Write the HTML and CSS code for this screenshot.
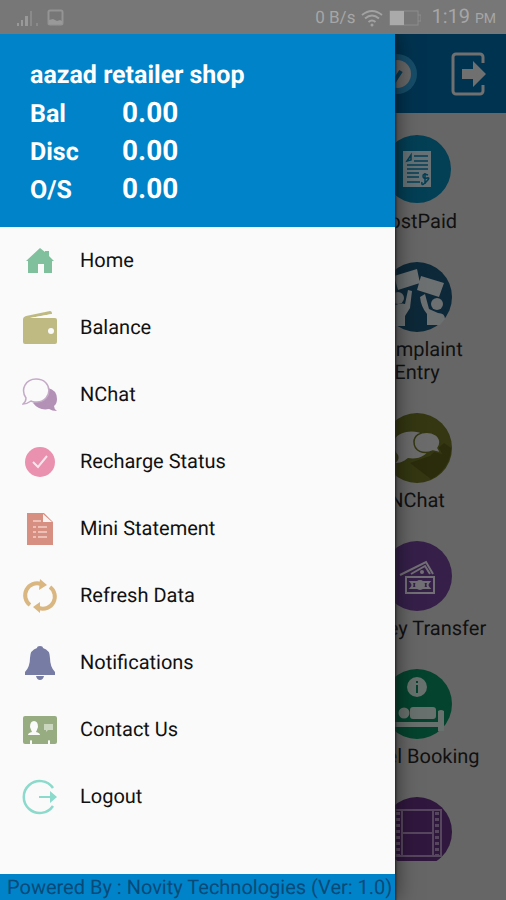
FILE: index.html
```html
<!DOCTYPE html>
<html lang="en">
<head>
<meta charset="utf-8">
<meta name="viewport" content="width=device-width, initial-scale=1">
<title>Retailer</title>
<link rel="stylesheet" href="styles.css">
</head>
<body>
<div class="status">
  <svg class="status-signal" viewBox="0 0 24 18" aria-hidden="true"><path d="M1 14h2v3H1zM5 11h2v6H5zM9 7h3v10H9z" fill="#999"/><path d="M14 2h2v15h-2zM20 14h2v3h-2z" fill="#8a8a8a"/></svg>
  <svg class="status-picture" viewBox="0 0 18 18" aria-hidden="true"><rect x="1.5" y="1.5" width="14" height="14" rx="1.5" fill="none" stroke="#949494" stroke-width="2"/><path d="M2 15v-4l4-1 4 2 3-1 2 1v3z" fill="#999"/></svg>
  <span class="status-rate">0 B/s</span>
  <svg class="status-wifi" viewBox="0 0 22 18" aria-hidden="true"><g fill="none" stroke="#a2a2a2" stroke-width="2"><path d="M1 6q10-8 20 0"/><path d="M4 9.500q7-6 14 0"/><path d="M7.500 13q3.500-3 7 0"/></g><circle cx="11" cy="16" r="1.500" fill="#a2a2a2"/></svg>
  <svg class="status-battery" viewBox="0 0 32 16" aria-hidden="true"><rect x="1" y="1" width="28" height="14" fill="none" stroke="#8d8d8d"/><path d="M29 5h3v6h-3" fill="none" stroke="#8d8d8d"/><path d="M1 1h14v14H1z" fill="#aaa"/></svg>
  <span class="status-time">1:19 <small>PM</small></span>
</div>
<div class="stage">
  <main class="page">
    <header class="topbar">
      <button class="icon-button" type="button" aria-label="Status"><svg viewBox="0 0 46 46" aria-hidden="true"><circle cx="21" cy="23" r="20" fill="#174d69"/><circle cx="21" cy="23" r="14" fill="#686868"/><path d="M13 23l6 6 6-9" fill="none" stroke="#063a55" stroke-width="4"/></svg></button>
      <button class="icon-button" type="button" aria-label="Exit"><svg viewBox="0 0 46 46" aria-hidden="true"><path d="M37 12V6a3 3 0 0 0-3-3H10a3 3 0 0 0-3 3v34a3 3 0 0 0 3 3h24a3 3 0 0 0 3-3v-6" fill="none" stroke="#707070" stroke-width="3"/><path d="M16 18h11v-8l13 13-13 13v-8H16z" fill="#707070"/></svg></button>
    </header>
    <div class="tiles">
      <a class="tile" href="#"><svg class="tile-icon" viewBox="0 0 70 70" aria-hidden="true"><circle cx="35" cy="35" r="34" fill="#033f55"/><path d="M21 17h28v36H21z" fill="#667276"/><g stroke="#033f55" stroke-width="1.500"><path d="M32 22h14M32 27h14M25 31h21M25 35h21M25 39h12M25 43h12M25 48h13"/></g><path d="M25 27l4-6v5zM46 41q-5-2-5 1t4 2-1 4-4 0M43 39v11" fill="none" stroke="#033f55" stroke-width="1.500"/></svg><span>PostPaid</span></a>
      <a class="tile" href="#"><svg class="tile-icon" viewBox="0 0 70 70" aria-hidden="true"><circle cx="35" cy="35" r="35" fill="#0d2838"/><g fill="#6c7071"><path d="M12 14l23-7 3 14-22 7zM39 14l23 7-5 14-22-7z"/><circle cx="16" cy="36" r="6"/><path d="M7 47q10-7 16-5l3-14 4 1-2 17-5 8v10H7z"/><circle cx="55" cy="42" r="6"/><path d="M38 35l5-3 4 15 9 4q7 0 7 6l-5 6H45V52q-6-7-7-17z"/></g></svg><span>Complaint<br>Entry</span></a>
      <a class="tile" href="#"><svg class="tile-icon" viewBox="0 0 70 70" aria-hidden="true"><circle cx="35" cy="35" r="35" fill="#343711"/><path d="M48 43L62 30l7 5a35 35 0 0 1-20 31L28 50z" fill="#2b2c0b"/><path d="M12 30c0-15 35-16 36 1 0 12-13 16-22 14-5 4-8 5-13 5 4-3 4-5 3-8-3-3-4-7-4-12z" fill="#6b6b6b"/><path d="M32 29c0-13 25-13 26 0q0 3-2 6l3 5-8-2c-10 4-19 0-19-9z" fill="#6b6b6b" stroke="#343711" stroke-width="1.500"/></svg><span>NChat</span></a>
      <a class="tile" href="#"><svg class="tile-icon" viewBox="0 0 70 70" aria-hidden="true"><circle cx="35" cy="35" r="35" fill="#36204a"/><g fill="none" stroke="#727075" stroke-width="2"><path d="M18 34l26-13 7 12M29 33l14-8 5 8"/><rect x="24" y="36" width="28" height="16"/></g><path d="M27 39h22v10H27z" fill="#36204a"/><path d="M29 41q3 3 0 6h18q-3-3 0-6z" fill="none" stroke="#727075" stroke-width="2"/><ellipse cx="38" cy="44" rx="5" ry="5" fill="#727075"/><circle cx="40" cy="31" r="2" fill="#727075"/></svg><span>Money Transfer</span></a>
      <a class="tile" href="#"><svg class="tile-icon" viewBox="0 0 70 70" aria-hidden="true"><circle cx="35" cy="35" r="35" fill="#04432e"/><g fill="#68716d"><circle cx="35" cy="18" r="10"/><circle cx="22" cy="44" r="5.500"/><rect x="28" y="38" width="26" height="12" rx="3"/><path d="M5 53h51V42q3-2 6 0v20h-6v-4H8z"/></g><path d="M35 16v8M35 12v2" fill="none" stroke="#04432e" stroke-width="2"/></svg><span>Hotel Booking</span></a>
      <a class="tile" href="#" aria-label="Movies"><svg class="tile-icon" viewBox="0 0 70 70" aria-hidden="true"><circle cx="35" cy="35" r="35" fill="#30173e"/><g fill="none" stroke="#57475e" stroke-width="2"><path d="M13 13h46v46H13zM20 13v46M51 13v46M20 36h31"/><path d="M16 15v44M55 15v44" stroke-width="4" stroke-dasharray="3 3"/></g></svg></a>
    </div>
  </main>
  <aside class="drawer">
    <header class="account">
      <h1>aazad retailer shop</h1>
      <dl>
        <dt>Bal</dt><dd>0.00</dd>
        <dt>Disc</dt><dd>0.00</dd>
        <dt>O/S</dt><dd>0.00</dd>
      </dl>
    </header>
    <nav class="menu">
      <a href="#"><svg viewBox="0 0 36 36" aria-hidden="true"><path d="M18 5l5 4V8h4v5l5 5h-2v12h-8v-9h-6v9H6V18H4z" fill="#80c09c"/></svg>Home</a>
      <a href="#"><svg viewBox="0 0 36 36" aria-hidden="true"><path d="M1 9Q1 7 4 6l24-5q2 0 2 3L8 8H33q2 0 2 2v22q0 2-2 2H3q-2 0-2-2z" fill="#bfba82"/><path d="M5 8h3l22-4v4z" fill="#fafafa"/><circle cx="29" cy="21" r="3" fill="#fafafa"/></svg>Balance</a>
      <a href="#"><svg viewBox="0 0 36 36" aria-hidden="true"><path d="M26 11q9 2 9 11 0 5-3 7 0 3 3 5-5 0-8-2-10 2-16-6z" fill="#b391b7"/><path d="M14 2c17 0 17 22 1 23-3 0-5 0-6-1q-4 3-8 3 3-2 3-6C-2 12 4 2 14 2z" fill="#fafafa" stroke="#c4aac7" stroke-width="1.500"/></svg>NChat</a>
      <a href="#"><svg viewBox="0 0 36 36" aria-hidden="true"><circle cx="18" cy="18" r="15" fill="#ea91af"/><path d="M11 18l5 5 9-11" fill="none" stroke="#fae5ec" stroke-width="2"/></svg>Recharge Status</a>
      <a href="#"><svg viewBox="0 0 36 36" aria-hidden="true"><path d="M5 2h17l9 9v23H5z" fill="#d68f80"/><path d="M21 3v8h9z" fill="#fbf3f1"/><path d="M11 10h8M11 16h3M16 16h9M11 21h3M16 21h9M11 26h3M16 26h9" stroke="#ecc0b6" stroke-width="2"/></svg>Mini Statement</a>
      <a href="#"><svg viewBox="0 0 36 36" aria-hidden="true"><g fill="none" stroke="#dab780" stroke-width="4"><path d="M8 27A12 12 0 0 1 19 6"/><path d="M28 9A12 12 0 0 1 17 30"/></g><path d="M18 1l7 6-8 5zM18 24v11l-7-6z" fill="#dab780"/></svg>Refresh Data</a>
      <a href="#"><svg viewBox="0 0 36 36" aria-hidden="true"><path d="M15 3q0-2 3-2t3 2q7 2 7 10 0 9 5 14v3H3v-3q5-5 5-14 0-8 7-10zM14 31h8q-1 4-4 4t-4-4z" fill="#777ca5"/></svg>Notifications</a>
      <a href="#"><svg viewBox="0 0 36 36" aria-hidden="true"><rect x="1" y="4" width="34" height="28" rx="2" fill="#98ac82"/><path d="M6 23q0-2 4-3-1-2-2-5 0-6 4-6t4 6q-1 3-2 5 4 1 4 3zM8 32v-3q1-2 2 0v3zM26 32v-3q1-2 2 0v3z" fill="#fafafa"/><path d="M22 12h9v6h-5l-2 2v-2h-2z" fill="#cbd6be"/></svg>Contact Us</a>
      <a href="#"><svg viewBox="0 0 36 36" aria-hidden="true"><path d="M31 9A16 16 0 1 0 31 27" fill="none" stroke="#8bdacb" stroke-width="2.500"/><path d="M17 17h11v-5l7 6-7 6v-5H17z" fill="#8bdacb"/></svg>Logout</a>
    </nav>
    <footer class="credit">Powered By : Novity Technologies (Ver: 1.0)</footer>
  </aside>
</div>
</body>
</html>
```
FILE: styles.css
```css
* {
  box-sizing: border-box;
}

body {
  margin: 0;
  min-height: 100vh;
  display: flex;
  flex-direction: column;
  background: #666;
  color: #111;
  font-family: Roboto, "Liberation Sans", sans-serif;
  font-size: 20px;
  line-height: 23px;
  text-rendering: geometricPrecision;
}

a {
  color: inherit;
  text-decoration: none;
}

svg {
  display: block;
  flex: none;
}

.status {
  display: flex;
  align-items: center;
  height: 34px;
  padding: 2px 10px 0 16px;
  background: #777;
  color: #a6a6a6;
}

.status-signal {
  width: 24px;
  height: 18px;
  margin-right: 7px;
}

.status-picture {
  width: 18px;
  height: 18px;
}

.status-rate {
  margin-left: auto;
  font-size: 17px;
}

.status-wifi {
  width: 22px;
  height: 18px;
  margin: 0 6px;
}

.status-battery {
  width: 32px;
  height: 16px;
  margin-right: 10px;
}

.status-time small {
  font-size: 14px;
}

.stage {
  position: relative;
  flex: 1;
  display: flex;
  flex-direction: column;
  overflow: hidden;
}

.page {
  flex: 1;
}

.topbar {
  display: flex;
  justify-content: flex-end;
  align-items: center;
  gap: 24px;
  height: 79px;
  padding: 0 14px;
  background: #003350;
}

.icon-button {
  padding: 0;
  border: 0;
  background: none;
}

.icon-button svg {
  width: 46px;
  height: 46px;
}

.tiles {
  display: grid;
  grid-template-columns: repeat(3, 1fr);
  row-gap: 29px;
  max-height: 748px;
  padding: 21px 7px 0;
  overflow: hidden;
}

.tile {
  grid-column: 3;
  display: flex;
  flex-direction: column;
  align-items: center;
  gap: 6px;
  text-align: center;
}

.tile-icon {
  width: 70px;
  height: 70px;
}

.drawer {
  position: absolute;
  inset: 0 auto 0 0;
  width: 78%;
  display: flex;
  flex-direction: column;
  background: #fafafa;
  box-shadow: 0 0 2px 1px #222, 2px 0 20px rgba(0, 0, 0, 0.5);
}

.account {
  padding: 24px 30px 19px;
  background: #0083c8;
  color: #fff;
  font-weight: 700;
}

.account h1 {
  margin: 0;
  font-size: 25px;
  line-height: 36px;
}

.account dl {
  display: grid;
  grid-template-columns: 92px 1fr;
  grid-auto-rows: 38px;
  align-items: baseline;
  margin: 0;
  font-size: 25px;
  line-height: 37px;
}

.account dd {
  margin: 0;
  font-size: 28px;
}

.menu {
  flex: 1;
}

.menu a {
  display: flex;
  align-items: center;
  gap: 22px;
  height: 67px;
  padding-left: 22px;
}

.menu svg {
  width: 36px;
  height: 36px;
}

.credit {
  padding: 2px 7px 1px;
  background: #0083c8;
  color: #074a78;
  white-space: nowrap;
}
```
